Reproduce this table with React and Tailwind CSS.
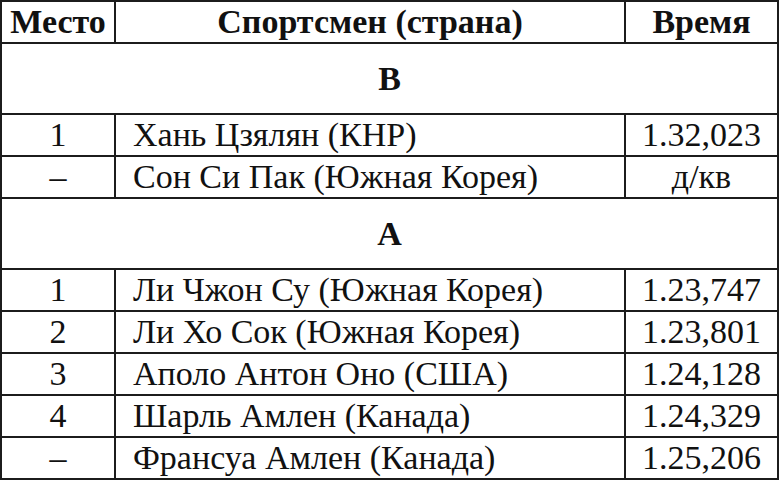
const groups = [
  {
    title: "B",
    rows: [
      { place: "1", name: "Хань Цзялян (КНР)", time: "1.32,023" },
      { place: "–", name: "Сон Си Пак (Южная Корея)", time: "д/кв" },
    ],
  },
  {
    title: "A",
    rows: [
      { place: "1", name: "Ли Чжон Су (Южная Корея)", time: "1.23,747" },
      { place: "2", name: "Ли Хо Сок (Южная Корея)", time: "1.23,801" },
      { place: "3", name: "Аполо Антон Оно (США)", time: "1.24,128" },
      { place: "4", name: "Шарль Амлен (Канада)", time: "1.24,329" },
      { place: "–", name: "Франсуа Амлен (Канада)", time: "1.25,206" },
    ],
  },
];

const cell = "border-2 border-[#1c1c1c] leading-none p-0";

export default function App() {
  return (
    <div className="w-[779px] h-[481px] bg-white text-[#111] font-['Liberation_Serif',serif]">
      <table className="w-[779px] border-collapse table-fixed">
        <colgroup>
          <col className="w-[114px]" />
          <col className="w-[510px]" />
          <col />
        </colgroup>
        <thead>
          <tr className="h-[42px] text-[34px] font-bold">
            <th className={`${cell} text-center`}>Место</th>
            <th className={`${cell} text-center`}>Спортсмен (страна)</th>
            <th className={`${cell} text-center`}>Время</th>
          </tr>
        </thead>
        <tbody>
          {groups.map((g) => (
            <>
              <tr key={g.title} className="h-[71px]">
                <td colSpan={3} className={`${cell} text-center text-[34px] font-bold`}>
                  {g.title}
                </td>
              </tr>
              {g.rows.map((r, i) => (
                <tr key={g.title + i} className="h-[42px] text-[34px]">
                  <td className={`${cell} text-center`}>{r.place}</td>
                  <td className={`${cell} pl-[17px] text-left`}>{r.name}</td>
                  <td className={`${cell} text-center`}>{r.time}</td>
                </tr>
              ))}
            </>
          ))}
        </tbody>
      </table>
    </div>
  );
}
